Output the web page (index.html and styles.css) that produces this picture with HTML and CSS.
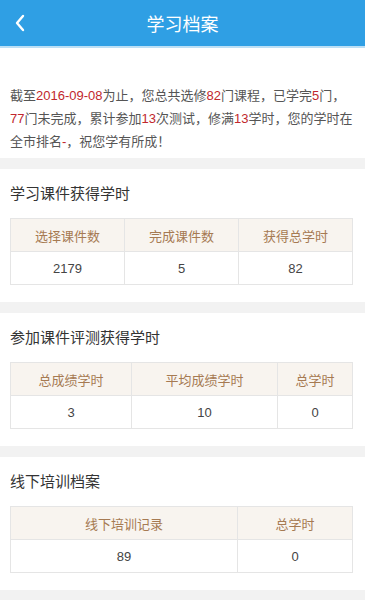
FILE: index.html
```html
<!DOCTYPE html>
<html>
<head>
    <meta charset="utf-8">
    <title>学习档案</title>
    <link rel="stylesheet" href="styles.css">
</head>
<body>
    <div class="header">
        <span class="back">
            <svg width="12" height="18" viewBox="0 0 12 18"><path d="M9 2 L3 9 L9 16" fill="none" stroke="#fff" stroke-width="2.4" stroke-linecap="round" stroke-linejoin="round"/></svg>
        </span>
        <h1>学习档案</h1>
    </div>

    <div class="intro">
        截至<em>2016-09-08</em>为止，您总共选修<em>82</em>门课程，已学完<em>5</em>门，<em>77</em>门未完成，累计参加<em>13</em>次测试，修满<em>13</em>学时，您的学时在全市排名<em>-</em>，祝您学有所成！
    </div>

    <div class="section">
        <div class="title">学习课件获得学时</div>
        <table class="fixed">
            <tr><th>选择课件数</th><th>完成课件数</th><th>获得总学时</th></tr>
            <tr><td>2179</td><td>5</td><td>82</td></tr>
        </table>
    </div>

    <div class="section">
        <div class="title">参加课件评测获得学时</div>
        <table>
            <tr><th class="w1">总成绩学时</th><th class="w2">平均成绩学时</th><th>总学时</th></tr>
            <tr><td>3</td><td>10</td><td>0</td></tr>
        </table>
    </div>

    <div class="section">
        <div class="title">线下培训档案</div>
        <table>
            <tr><th class="w3">线下培训记录</th><th>总学时</th></tr>
            <tr><td>89</td><td>0</td></tr>
        </table>
    </div>
</body>
</html>
```

FILE: styles.css
```css
* {
    box-sizing: border-box;
}

body {
    margin: 0;
    background-color: #f2f2f2;
    font-family: "Liberation Sans", "Noto Sans CJK SC", sans-serif;
    color: #444;
}

.header {
    position: relative;
    height: 48px;
    background-color: #2f9fe4;
    border-bottom: 2px solid #bcdff5;
    display: flex;
    align-items: center;
    justify-content: center;
}

.header h1 {
    margin: 0;
    font-size: 18px;
    font-weight: normal;
    color: #fff;
}

.back {
    position: absolute;
    left: 14px;
    top: 14px;
}

.intro {
    background-color: #fff;
    padding: 36px 10px 5px 10px;
    font-size: 13px;
    line-height: 23px;
    color: #555;
}

.intro em {
    font-style: normal;
    color: #c1272d;
}

.section {
    background-color: #fff;
    margin-top: 11px;
    padding: 15px 12px 17px 10px;
}

.title {
    font-size: 15px;
    line-height: 20px;
    color: #333;
    margin-bottom: 14px;
}

table {
    width: 100%;
    border-collapse: collapse;
    border: 1px solid #e5e5e5;
}

table.fixed {
    table-layout: fixed;
}

th, td {
    height: 33px;
    border: 1px solid #e5e5e5;
    text-align: center;
    font-size: 13px;
    font-weight: normal;
    padding: 0;
}

th {
    background-color: #f8f4ef;
    color: #a67a52;
}

td {
    color: #444;
}

.w1 {
    width: 121px;
}

.w2 {
    width: 146px;
}

.w3 {
    width: 227px;
}
```
